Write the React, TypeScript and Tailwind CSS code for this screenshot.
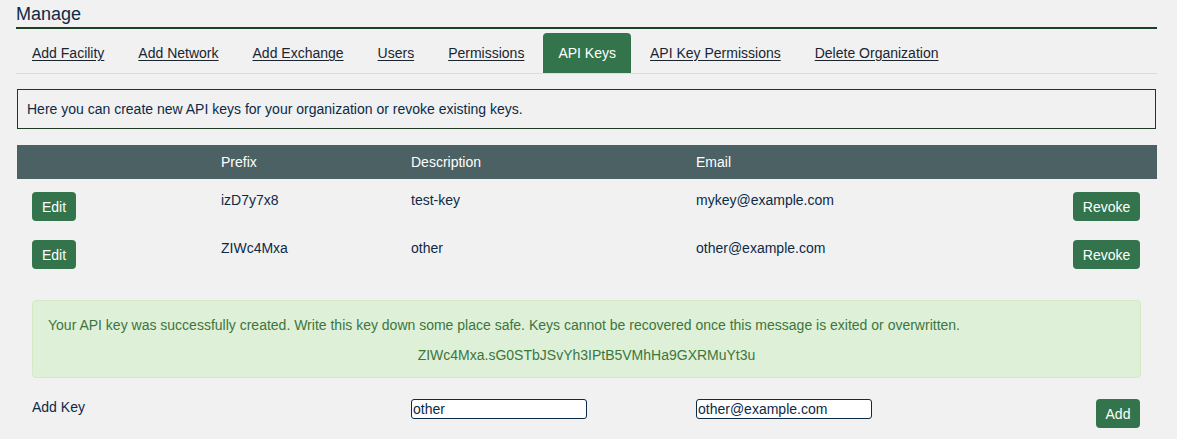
import React from "react";

const TABS = [
  "Add Facility",
  "Add Network",
  "Add Exchange",
  "Users",
  "Permissions",
  "API Keys",
  "API Key Permissions",
  "Delete Organization",
];

const KEYS = [
  { prefix: "izD7y7x8", description: "test-key", email: "mykey@example.com" },
  { prefix: "ZIWc4Mxa", description: "other", email: "other@example.com" },
];

const COLS = "grid grid-cols-[188px_190px_285px_1fr_auto]";

function GreenButton({ label, width }: { label: string; width: string }) {
  return (
    <button className={`${width} h-[29px] rounded-[4px] bg-[#34744c] text-sm leading-none text-white`}>
      {label}
    </button>
  );
}

export default function App() {
  return (
    <div className="min-h-screen bg-[#f1f1f1] font-['Liberation_Sans',Arial,sans-serif] text-[#0d2a47]">
      <div className="pl-4 pr-5">
        <h2 className="pt-[4px] pb-[3px] text-[18px] leading-[20px] border-b-2 border-[#1b4125]">Manage</h2>

        <nav className="mt-[4px] flex gap-1 border-b border-[#dcdcdc] pl-px">
          {TABS.map((t) =>
            t === "API Keys" ? (
              <span key={t} className="h-10 rounded-t-[4px] bg-[#34744c] px-[15px] text-sm leading-10 text-white">
                {t}
              </span>
            ) : (
              <a key={t} className="h-10 px-[15px] text-sm leading-10 text-[#1a2530] underline underline-offset-2">
                {t}
              </a>
            )
          )}
        </nav>

        <div className="mx-px mt-[15px] border border-[#1e3a25] px-[9px] py-[11px] text-sm leading-[16px]">
          Here you can create new API keys for your organization or revoke existing keys.
        </div>

        <div className="ml-px mt-4">
          <div className={`${COLS} h-[34px] items-center bg-[#4b6163] text-sm text-white`}>
            <div />
            <div className="pl-4">Prefix</div>
            <div className="pl-4">Description</div>
            <div className="pl-4">Email</div>
            <div className="pr-[17px]" />
          </div>

          {KEYS.map((k) => (
            <div key={k.prefix} className={`${COLS} pt-[13px] pb-[6px] text-sm leading-4`}>
              <div className="pl-[15px]">
                <GreenButton label="Edit" width="w-[44px]" />
              </div>
              <div className="pl-4">{k.prefix}</div>
              <div className="pl-4">{k.description}</div>
              <div className="pl-4">{k.email}</div>
              <div className="pr-[17px]">
                <GreenButton label="Revoke" width="w-[67px]" />
              </div>
            </div>
          ))}

          <div className="ml-[15px] mr-4 mt-[25px] flex flex-col gap-3 rounded-[4px] border border-[#d6e9c6] bg-[#dff0d8] px-[15px] pt-[15px] pb-[13px] text-sm leading-[18px] text-[#3c763d]">
            <p>
              Your API key was successfully created. Write this key down some place safe. Keys cannot be recovered once
              this message is exited or overwritten.
            </p>
            <p className="text-center">ZIWc4Mxa.sG0STbJSvYh3IPtB5VMhHa9GXRMuYt3u</p>
          </div>

          <div className={`${COLS} mt-[21px] text-sm leading-4`}>
            <div className="pl-[15px]">Add Key</div>
            <div />
            <div className="pl-4">
              <input
                defaultValue="other"
                className="h-5 w-[176px] rounded-[3px] border border-[#0d2a47] bg-white px-px text-sm text-[#0d2a47] outline-none"
              />
            </div>
            <div className="pl-4">
              <input
                defaultValue="other@example.com"
                className="h-5 w-[176px] rounded-[3px] border border-[#0d2a47] bg-white px-px text-sm text-[#0d2a47] outline-none"
              />
            </div>
            <div className="pr-[17px]">
              <GreenButton label="Add" width="w-[44px]" />
            </div>
          </div>
        </div>
      </div>
    </div>
  );
}
